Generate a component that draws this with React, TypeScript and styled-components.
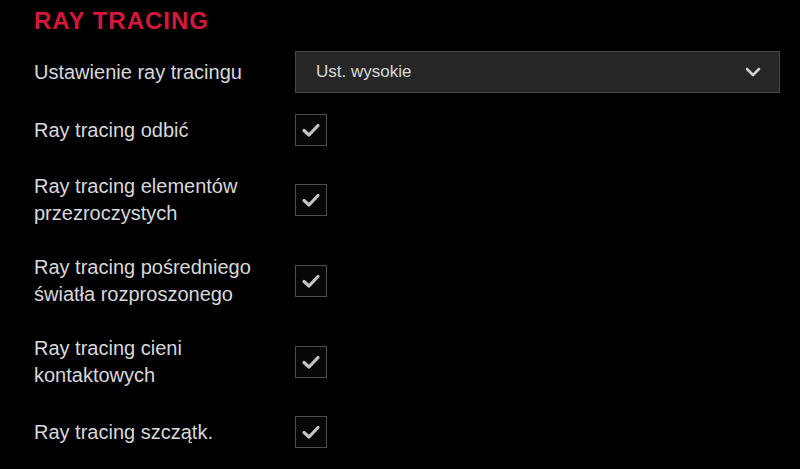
import React from "react";
import styled, { createGlobalStyle } from "styled-components";

const GlobalStyle = createGlobalStyle`
  html, body {
    margin: 0;
    padding: 0;
    background: #000;
  }
  body {
    font-family: "Liberation Sans", Arial, sans-serif;
    color: #d6d6d6;
  }
`;

const Page = styled.div`
  width: 800px;
  height: 469px;
  padding: 9px 20px 0 34px;
  box-sizing: border-box;
  background: #000;
  overflow: hidden;
`;

const Title = styled.h2`
  margin: 0 0 18px;
  font-size: 24px;
  line-height: 24px;
  font-weight: 700;
  letter-spacing: 1px;
  color: #d5173e;
`;

const List = styled.div`
  display: flex;
  flex-direction: column;
`;

const Row = styled.div<{ $gap: number }>`
  display: grid;
  grid-template-columns: 261px 1fr;
  align-items: center;
  margin-bottom: ${(p) => p.$gap}px;
`;

const Label = styled.div`
  max-width: 245px;
  font-size: 20px;
  line-height: 27px;
  color: #d8d8d8;
`;

const Select = styled.div`
  height: 42px;
  box-sizing: border-box;
  display: flex;
  align-items: center;
  justify-content: space-between;
  padding: 0 18px 0 20px;
  background: #262626;
  border: 1px solid #474747;
  font-size: 17px;
  color: #d8d8d8;
`;

const Box = styled.div`
  width: 32px;
  height: 32px;
  box-sizing: border-box;
  display: flex;
  align-items: center;
  justify-content: center;
  border: 1px solid #4e4e4e;
  background: #070707;
`;

const Chevron = () => (
  <svg width="16" height="10" viewBox="0 0 16 10">
    <path d="M2 2l6 6 6-6" fill="none" stroke="#cfcfcf" strokeWidth="2.6" strokeLinecap="round" strokeLinejoin="round" />
  </svg>
);

const Check = () => (
  <svg width="20" height="16" viewBox="0 0 20 16">
    <path d="M3 8.5l5 4.5 9-9.5" fill="none" stroke="#c4c4c4" strokeWidth="3.2" strokeLinecap="round" strokeLinejoin="round" />
  </svg>
);

const toggles = [
  "Ray tracing odbić",
  "Ray tracing elementów przezroczystych",
  "Ray tracing pośredniego światła rozproszonego",
  "Ray tracing cieni kontaktowych",
  "Ray tracing szczątk.",
];

const App: React.FC = () => {
  return (
    <>
      <GlobalStyle />
      <Page>
        <Title>RAY TRACING</Title>
        <List>
          <Row $gap={21}>
            <Label>Ustawienie ray tracingu</Label>
            <Select>
              <span>Ust. wysokie</span>
              <Chevron />
            </Select>
          </Row>
          {toggles.map((t) => (
            <Row key={t} $gap={27}>
              <Label>{t}</Label>
              <Box>
                <Check />
              </Box>
            </Row>
          ))}
        </List>
      </Page>
    </>
  );
};

export default App;
